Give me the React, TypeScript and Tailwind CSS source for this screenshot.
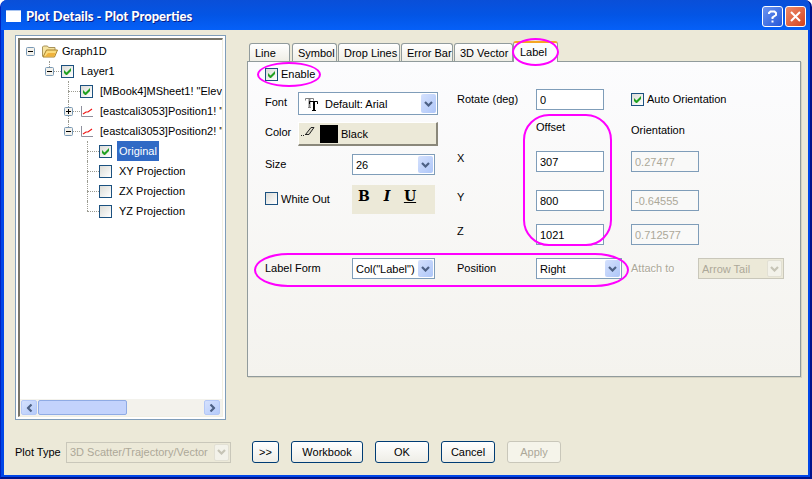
import { useState } from "react";
import type { ReactNode } from "react";

function CheckBox({ id, checked = false, label }: { id: string; checked?: boolean; label?: string }) {
  const [on, setOn] = useState(checked);
  return (
    <span className="relative block h-[13px] w-[13px] shrink-0">
      <input
        id={id}
        type="checkbox"
        aria-label={label}
        checked={on}
        onChange={() => setOn(!on)}
        className="block h-[13px] w-[13px] appearance-none border border-[#1c5180] bg-linear-to-br from-[#dcdcd7] to-white"
      />
      {on && (
        <svg viewBox="0 0 13 13" className="pointer-events-none absolute inset-0 h-[13px] w-[13px]" aria-hidden="true">
          <path d="M3 5v3l2 2h1l4-4V3L5.500 7.500z" fill="#21a121" />
        </svg>
      )}
    </span>
  );
}

function Chevron({ className }: { className: string }) {
  return (
    <svg viewBox="0 0 9 6" className={`h-[6px] w-[9px] ${className}`} fill="none" stroke="currentColor" strokeWidth="2.2" aria-hidden="true">
      <path d="M1 1l3.500 3.500L8 1" />
    </svg>
  );
}

function Select({
  id,
  value,
  label,
  width,
  size = "h-[21px]",
  inset = "pl-[3px]",
  disabled = false,
  icon,
}: {
  id: string;
  value: string;
  label?: string;
  width: string;
  size?: string;
  inset?: string;
  disabled?: boolean;
  icon?: ReactNode;
}) {
  return (
    <span className={`relative block shrink-0 ${width} ${size}`}>
      <select
        id={id}
        aria-label={label}
        disabled={disabled}
        className={`block h-full w-full appearance-none border pr-[18px] ${inset} ${
          disabled ? "border-[#c9c7ba] bg-[#ece9d8] text-[#aca899] opacity-100" : "border-[#7f9db9] bg-white text-black"
        }`}
      >
        <option>{value}</option>
      </select>
      {icon}
      <span
        className={`pointer-events-none absolute inset-y-[2px] right-[2px] flex w-[15px] items-center justify-center rounded-[2px] ${
          disabled ? "border border-[#e2e0d4] bg-[#f3f2ea]" : "bg-linear-to-br from-[#d5e1fd] to-[#aec6f8]"
        }`}
      >
        <Chevron className={disabled ? "text-[#c6c4b6]" : "text-[#4d6185]"} />
      </span>
    </span>
  );
}

function TextBox({ id, value, label, disabled = false }: { id: string; value: string; label?: string; disabled?: boolean }) {
  return (
    <input
      id={id}
      type="text"
      aria-label={label}
      defaultValue={value}
      disabled={disabled}
      className={`block h-[21px] w-[68px] shrink-0 border border-[#7f9db9] px-[3px] ${
        disabled ? "bg-[#f9f9f8] text-[#aca899]" : "bg-white text-black"
      }`}
    />
  );
}

function Branch({ kind }: { kind: "top" | "open" | "openEnd" | "closed" | "tee" | "elbow" | "blank" }) {
  const dots = "absolute border-dotted border-[#9c9c92]";
  const box = kind === "top" || kind === "open" || kind === "openEnd" || kind === "closed";
  return (
    <span className="relative block h-5 w-[19px] shrink-0">
      {kind !== "blank" && kind !== "top" && (
        <>
          <span className={`${dots} left-[9px] top-0 border-l ${kind === "tee" || kind === "closed" ? "h-5" : "h-[10px]"}`} />
          <span className={`${dots} left-[9px] top-[10px] w-3 border-t`} />
        </>
      )}
      {box && (
        <svg viewBox="0 0 9 9" className="absolute left-[5px] top-[6px] h-[9px] w-[9px]" aria-hidden="true">
          <rect x="0.500" y="0.500" width="8" height="8" rx="1" fill="#f4f2ec" stroke="#7898b5" />
          <path d={kind === "closed" ? "M2 4.500h5M4.500 2v5" : "M2 4.500h5"} stroke="#000" />
        </svg>
      )}
    </span>
  );
}

function PlotIcon() {
  return (
    <svg viewBox="0 0 13 13" className="h-[13px] w-[13px] shrink-0" fill="none" aria-hidden="true">
      <path d="M1.500 1v10.500H13" stroke="#8f8f9d" />
      <path d="M3 9l3-2h2l4-3" stroke="#f01818" strokeWidth="1.200" />
    </svg>
  );
}

function FolderIcon() {
  return (
    <svg viewBox="0 0 16 13" className="h-[13px] w-4 shrink-0" aria-hidden="true">
      <path d="M0.500 11.500V2l1-1h4l1 1.500h6.500V5" fill="#f5e3a0" stroke="#a8935a" />
      <path d="M1 12L4.500 5H15.500L12.500 12z" fill="#fbdc7c" stroke="#a8802a" />
      <path d="M3 11.500L6 8h7.500l-1.500 3.500z" fill="#f0b23c" />
    </svg>
  );
}

type Node = {
  text: string;
  depth: number;
  kind: "top" | "open" | "openEnd" | "closed" | "tee" | "elbow";
  icon: "folder" | "plot" | "on" | "off";
  selected?: boolean;
};

const nodes: Node[] = [
  { text: "Graph1D", depth: 0, kind: "top", icon: "folder" },
  { text: "Layer1", depth: 1, kind: "open", icon: "on" },
  { text: '[MBook4]MSheet1! "Elev', depth: 2, kind: "tee", icon: "on" },
  { text: '[eastcali3053]Position1! "', depth: 2, kind: "closed", icon: "plot" },
  { text: '[eastcali3053]Position2! "', depth: 2, kind: "openEnd", icon: "plot" },
  { text: "Original", depth: 3, kind: "tee", icon: "on", selected: true },
  { text: "XY Projection", depth: 3, kind: "tee", icon: "off" },
  { text: "ZX Projection", depth: 3, kind: "tee", icon: "off" },
  { text: "YZ Projection", depth: 3, kind: "elbow", icon: "off" },
];

function TreeRow({ node }: { node: Node }) {
  const id = `node-${node.text}`;
  return (
    <li className="flex h-5 items-center">
      {Array.from({ length: node.depth }, (_, i) => (
        <Branch key={i} kind="blank" />
      ))}
      <Branch kind={node.kind} />
      <span className={`ml-[2px] flex shrink-0 ${node.icon === "folder" ? "mr-[2px]" : "mr-[5px]"}`}>
        {node.icon === "folder" && <FolderIcon />}
        {node.icon === "plot" && <PlotIcon />}
        {(node.icon === "on" || node.icon === "off") && <CheckBox id={id} label={node.text} checked={node.icon === "on"} />}
      </span>
      <span className={`whitespace-nowrap pl-[2px] leading-5 ${node.selected ? "bg-[#316ac5] pr-[2px] text-white" : ""}`}>{node.text}</span>
    </li>
  );
}

function ScrollButton({ left }: { left?: boolean }) {
  return (
    <button
      type="button"
      aria-label={left ? "Scroll left" : "Scroll right"}
      className="flex h-[15px] w-[16px] shrink-0 items-center justify-center rounded-[2px] border border-[#b4c8f6] bg-linear-to-br from-[#d5e1fd] to-[#b5cbfa]"
    >
      <Chevron className={left ? "rotate-90 text-[#4d6185]" : "-rotate-90 text-[#4d6185]"} />
    </button>
  );
}

function Tree() {
  return (
    <div className="flex w-[211px] shrink-0 border border-[#7f9db9] bg-white p-[2px]">
      <div className="flex min-w-0 flex-1 flex-col border-b border-l-2 border-r border-t-2 border-b-[#f1efe2] border-l-[#77756a] border-r-[#f1efe2] border-t-[#77756a] bg-white">
        <ul className="flex-1 overflow-hidden pl-px pt-px">
          {nodes.map((n) => (
            <TreeRow key={n.text} node={n} />
          ))}
        </ul>
        <div className="flex h-[17px] items-center bg-[#f3f2ec] pl-px pr-[2px]">
          <ScrollButton left />
          <span className="ml-px h-[15px] w-[89px] rounded-[2px] border border-[#8fabe4] bg-[#c3d3fc]" />
          <span className="flex-1" />
          <ScrollButton />
        </div>
      </div>
    </div>
  );
}

const tabs = [
  { name: "Line", width: "w-[41px] mr-[2px]" },
  { name: "Symbol", width: "w-[45px] mr-px" },
  { name: "Drop Lines", width: "w-[62px] mr-px" },
  { name: "Error Bar", width: "w-[52px] mr-px" },
  { name: "3D Vector", width: "w-[59px]" },
];

function Tabs() {
  return (
    <div className="flex items-end pl-[2px]" role="tablist">
      {tabs.map((t) => (
        <button
          key={t.name}
          type="button"
          role="tab"
          className={`h-[18px] shrink-0 whitespace-nowrap rounded-t-[3px] border border-b-0 border-[#919b9c] bg-linear-to-b from-white to-[#efeee6] pl-[5px] text-left leading-[18px] ${t.width}`}
        >
          {t.name}
        </button>
      ))}
      <button
        type="button"
        role="tab"
        aria-selected="true"
        className="relative z-10 -mb-px h-[21px] w-[45px] shrink-0 rounded-t-[3px] border border-b-0 border-t-2 border-[#919b9c] border-t-[#f5a623] bg-[#fcfcfe] pl-[6px] text-left leading-[17px]"
      >
        Label
        <span className="pointer-events-none absolute -left-[2px] -top-[5px] h-[28px] w-[47px] rounded-[50%] border-2 border-[#ff00ff]" />
      </button>
    </div>
  );
}

function FontIcon() {
  return (
    <svg viewBox="0 0 13 14" className="pointer-events-none absolute left-[7px] top-[5px] h-[14px] w-[13px]" fill="none" aria-hidden="true">
      <path d="M0.500 3.500V1.500h8v2M3 10.500h3" stroke="#808080" />
      <path d="M4.500 1v9" stroke="#808080" strokeWidth="2" />
      <path d="M4.500 7V4.500h8V7M7 13.500h4" stroke="#000" />
      <path d="M9 4v9" stroke="#000" strokeWidth="2" />
    </svg>
  );
}

function PencilIcon() {
  return (
    <svg viewBox="0 0 14 12" className="-mt-[5px] h-3 w-[14px]" fill="none" stroke="#222" aria-hidden="true">
      <path d="M4.500 9.500L10 2.500h3L8 9.500z" fill="#d8d5c4" />
      <path d="M0 10.500h1M2 10.500h1M4 9.500h2" />
    </svg>
  );
}

function LabelPage() {
  const axes = [
    { axis: "X", offset: "307", orient: "0.27477", gap: "h-[39px]" },
    { axis: "Y", offset: "800", orient: "-0.64555", gap: "h-[34px]" },
    { axis: "Z", offset: "1021", orient: "0.712577", gap: "h-[34px]" },
  ];
  return (
    <div className="relative flex flex-1 border border-[#919b9c] bg-linear-to-b from-[#fcfcfe] to-[#f4f3ee] pl-[17px] shadow-[1px_1px_0_#d6d3c2]">
      <div className="flex w-[192px] shrink-0 flex-col">
        <div className="relative flex h-[30px] items-center gap-[3px] pb-[6px]">
          <CheckBox id="enable" checked />
          <label htmlFor="enable">Enable</label>
          <span className="pointer-events-none absolute -left-[8px] top-0 h-[25px] w-[64px] rounded-[50%] border-2 border-[#ff00ff]" />
        </div>
        <div className="flex h-[30px]">
          <label htmlFor="font" className="w-[33px] leading-5">Font</label>
          <Select id="font" value="Default: Arial" width="w-[140px]" size="h-[23px]" inset="pl-[26px]" icon={<FontIcon />} />
        </div>
        <div className="flex h-[32px]">
          <label htmlFor="color" className="w-[33px] leading-5">Color</label>
          <button
            id="color"
            type="button"
            className="flex h-6 w-[140px] items-center border-b-2 border-l border-r-2 border-t border-b-[#8a877a] border-l-white border-r-[#8a877a] border-t-white bg-[#ece9d8] pl-[2px]"
          >
            <PencilIcon />
            <span className="ml-[5px] mr-[3px] h-[18px] w-[18px] bg-black" />
            Black
          </button>
        </div>
        <div className="flex h-[31px]">
          <label htmlFor="size" className="w-[87px] leading-5">Size</label>
          <Select id="size" value="26" width="w-[83px]" />
        </div>
        <div className="flex h-[73px]">
          <div className="flex h-[27px] w-[87px] items-center gap-[3px]">
            <CheckBox id="whiteout" />
            <label htmlFor="whiteout">White Out</label>
          </div>
          <div className="flex h-[29px] w-[83px] items-start gap-[5px] bg-[#ece9d8] pl-[3px] pt-px font-['DejaVu_Serif',serif] text-sm font-bold leading-5">
            <button type="button" className="w-[18px]">B</button>
            <button type="button" className="w-[18px] italic">I</button>
            <button type="button" className="w-[18px] underline">U</button>
          </div>
        </div>
        <div className="flex">
          <label htmlFor="form" className="w-[87px] leading-5">Label Form</label>
          <Select id="form" value={'Col("Label")'} width="w-[83px]" />
        </div>
      </div>

      <div className="flex shrink-0 flex-col pt-[27px]">
        <div className="flex h-[26px]">
          <label htmlFor="rotate" className="w-[79px] leading-5">Rotate (deg)</label>
          <TextBox id="rotate" value="0" />
          <div className="ml-[27px] flex h-5 items-center gap-[3px]">
            <CheckBox id="auto" checked />
            <label htmlFor="auto" className="whitespace-nowrap">Auto Orientation</label>
          </div>
        </div>
        <div className="relative flex h-[36px]">
          <span className="ml-[79px] w-[95px] leading-6">Offset</span>
          <span className="pt-[3px] leading-6">Orientation</span>
          <span className="pointer-events-none absolute -top-px left-[66px] h-[132px] w-[89px] rounded-[26px] border-2 border-[#ff00ff]" />
        </div>
        {axes.map((a) => (
          <div key={a.axis} className={`flex ${a.gap}`}>
            <label htmlFor={`offset-${a.axis}`} className="w-[79px] leading-[14px]">{a.axis}</label>
            <TextBox id={`offset-${a.axis}`} value={a.offset} />
            <span className="w-[27px]" />
            <TextBox id={`orient-${a.axis}`} label={`Orientation ${a.axis}`} value={a.orient} disabled />
          </div>
        ))}
        <div className="flex">
          <label htmlFor="position" className="w-[79px] leading-5">Position</label>
          <Select id="position" value="Right" width="w-[86px]" />
          <label htmlFor="attach" className="ml-[9px] w-[67px] leading-5 text-[#aca899] [text-shadow:1px_1px_0_#fff]">Attach to</label>
          <Select id="attach" value="Arrow Tail" width="w-[86px]" disabled />
        </div>
      </div>
      <span className="pointer-events-none absolute left-[6px] top-[191px] h-[34px] w-[375px] rounded-[34px/17px] border-2 border-[#ff00ff]" />
    </div>
  );
}

function PushButton({ children, width, disabled = false }: { children: ReactNode; width: string; disabled?: boolean }) {
  return (
    <button
      type="button"
      disabled={disabled}
      className={`h-[22px] shrink-0 rounded-[3px] border leading-5 ${width} ${
        disabled ? "border-[#c9c7ba] bg-[#f5f4ea] text-[#aca899]" : "border-[#003c74] bg-linear-to-b from-white to-[#eeede6]"
      }`}
    >
      {children}
    </button>
  );
}

export default function App() {
  return (
    <div className="flex min-h-screen flex-col overflow-hidden rounded-t-[7px] border-b-2 border-l border-r-2 border-b-[#00138c] border-l-[#0022c0] border-r-[#00138c] bg-[#0046e8] font-['Liberation_Sans',sans-serif] text-[11px] leading-4 text-black">
      <header className="flex h-[30px] items-center bg-linear-to-b from-[#0a4fd8] via-[#0355e5] to-[#0560f8] pl-[5px] pr-1 pt-[2px]">
        <svg viewBox="0 0 15 12" className="h-3 w-[15px]" aria-hidden="true">
          <rect width="15" height="12" fill="#fff" />
          <path d="M0 0.500h15" stroke="#a9c4f0" />
        </svg>
        <h1 className="ml-[5px] flex-1 font-['Lato',sans-serif] text-[13px] font-black text-white [text-shadow:1px_1px_0_#0a1f8a]">
          Plot Details - Plot Properties
        </h1>
        <button type="button" aria-label="Help" className="mr-[2px] flex h-[21px] w-[21px] items-center justify-center rounded-[3px] border border-white bg-linear-to-br from-[#6c94f0] to-[#2456d8]">
          <svg viewBox="0 0 11 13" className="h-[13px] w-[11px]" fill="none" stroke="#fff" strokeWidth="2" aria-hidden="true">
            <path d="M2 4V3l1.500-1.500h4L9 3v2L5.500 7.500V9M5.500 10.500v2" />
          </svg>
        </button>
        <button type="button" aria-label="Close" className="flex h-[21px] w-[21px] items-center justify-center rounded-[3px] border border-white bg-linear-to-br from-[#ee8a68] to-[#d2401a]">
          <svg viewBox="0 0 11 11" className="h-[11px] w-[11px]" stroke="#fff" strokeWidth="2" aria-hidden="true">
            <path d="M1 1l9 9M10 1l-9 9" />
          </svg>
        </button>
      </header>
      <div className="flex flex-1 flex-col border-b-2 border-l-[3px] border-r-2 border-[#0046e8] bg-[#ece9d8]">
        <main className="flex flex-1 pl-[11px] pr-[7px] pt-[5px]">
          <Tree />
          <section className="ml-[21px] flex min-w-0 flex-1 flex-col pb-[43px] pt-[6px]">
            <Tabs />
            <LabelPage />
          </section>
        </main>
        <footer className="flex items-center gap-3 pb-3 pl-[11px] pt-[21px]">
          <div className="mr-[9px] flex">
            <label htmlFor="plottype" className="w-[51px] whitespace-nowrap leading-5">Plot Type</label>
            <Select id="plottype" value="3D Scatter/Trajectory/Vector" width="w-[165px]" disabled />
          </div>
          <PushButton width="w-[27px]">&gt;&gt;</PushButton>
          <PushButton width="w-[72px]">Workbook</PushButton>
          <PushButton width="w-[54px]">OK</PushButton>
          <PushButton width="w-[54px]">Cancel</PushButton>
          <PushButton width="w-[54px]" disabled>Apply</PushButton>
        </footer>
      </div>
    </div>
  );
}
